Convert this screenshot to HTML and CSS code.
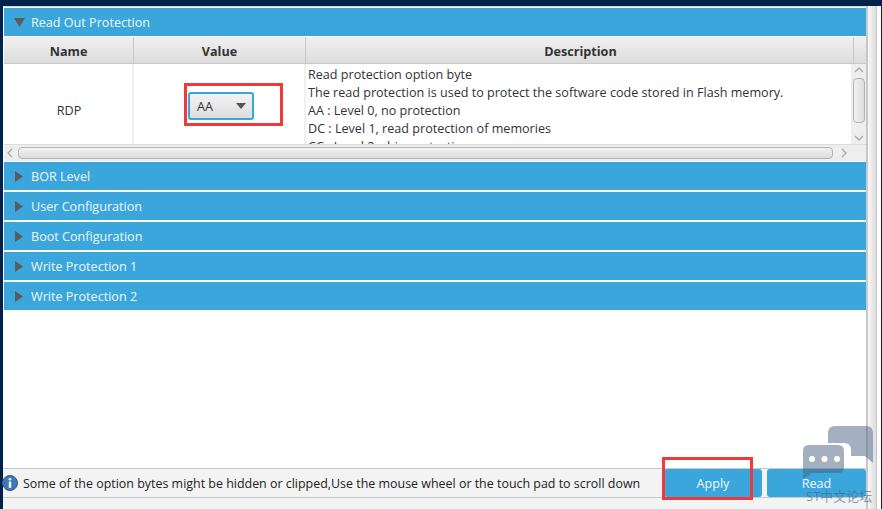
FILE: index.html
```html
<!DOCTYPE html>
<html lang="en">
  <head>
    <meta charset="UTF-8" />
    <title>Option Bytes</title>
    <link rel="stylesheet" href="styles.css">
  </head>
  <body>
    <div class="topbar"></div>
    <div class="window">
      <div class="panel">
        <div class="accordion">
          <div class="section section-open">
            <svg class="arrow" width="11" height="9" viewBox="0 0 11 9"><polygon points="0,0 11,0 5.5,9" /></svg>
            <span>Read Out Protection</span>
          </div>
          <div class="table">
            <div class="thead">
              <div class="th col-name">Name</div>
              <div class="th col-value">Value</div>
              <div class="th col-desc">Description</div>
              <div class="th col-corner"></div>
            </div>
            <div class="tbody">
              <div class="td col-name">RDP</div>
              <div class="td col-value">
                <div class="mark-select">
                  <div class="select">
                    <span>AA</span>
                    <svg width="10" height="6" viewBox="0 0 10 6"><polygon points="0,0 10,0 5,6" /></svg>
                  </div>
                </div>
              </div>
              <div class="td col-desc">
                <p>Read protection option byte</p>
                <p>The read protection is used to protect the software code stored in Flash memory.</p>
                <p>AA : Level 0, no protection</p>
                <p>DC : Level 1, read protection of memories</p>
                <p>CC : Level 2, chip protection</p>
              </div>
              <div class="vscroll">
                <svg width="10" height="6" viewBox="0 0 10 6"><polyline points="1,5 5,1 9,5" /></svg>
                <div class="vthumb"></div>
                <svg class="vdown" width="10" height="6" viewBox="0 0 10 6"><polyline points="1,1 5,5 9,1" /></svg>
              </div>
            </div>
            <div class="hscroll">
              <svg width="6" height="10" viewBox="0 0 6 10"><polyline points="5,1 1,5 5,9" /></svg>
              <div class="hthumb"></div>
              <svg width="6" height="10" viewBox="0 0 6 10"><polyline points="1,1 5,5 1,9" /></svg>
            </div>
          </div>
          <div class="section">
            <svg class="arrow" width="8" height="11" viewBox="0 0 8 11"><polygon points="0,0 8,5.5 0,11" /></svg>
            <span>BOR Level</span>
          </div>
          <div class="section">
            <svg class="arrow" width="8" height="11" viewBox="0 0 8 11"><polygon points="0,0 8,5.5 0,11" /></svg>
            <span>User Configuration</span>
          </div>
          <div class="section">
            <svg class="arrow" width="8" height="11" viewBox="0 0 8 11"><polygon points="0,0 8,5.5 0,11" /></svg>
            <span>Boot Configuration</span>
          </div>
          <div class="section">
            <svg class="arrow" width="8" height="11" viewBox="0 0 8 11"><polygon points="0,0 8,5.5 0,11" /></svg>
            <span>Write Protection 1</span>
          </div>
          <div class="section">
            <svg class="arrow" width="8" height="11" viewBox="0 0 8 11"><polygon points="0,0 8,5.5 0,11" /></svg>
            <span>Write Protection 2</span>
          </div>
        </div>
        <div class="footer">
          <svg class="info" width="16" height="16" viewBox="0 0 16 16">
            <circle cx="8" cy="8" r="7.5" fill="#3f78b5" stroke="#2a5a94" />
            <circle cx="8" cy="4.2" r="1.3" fill="#ffffff" />
            <rect x="6.8" y="6.6" width="2.4" height="6.2" fill="#ffffff" />
          </svg>
          <span class="notice">Some of the option bytes might be hidden or clipped,Use the mouse wheel or the touch pad to scroll down</span>
          <button class="btn btn-apply">Apply</button>
          <button class="btn btn-read">Read</button>
        </div>
        <div class="bottom"></div>
      </div>
      <div class="side"></div>
    </div>

    <div class="mark-apply"></div>

    <div class="watermark">
      <svg width="72" height="54" viewBox="0 0 72 54">
        <path d="M32 0 H63 Q70 0 70 7 V37 L62 30 H48 V24 Q48 17 41 17 H25 V7 Q25 0 32 0 Z" />
        <path d="M6 19 H35 Q41 19 41 25 V41 Q41 47 35 47 H9 L0 53 V25 Q0 19 6 19 Z" />
        <circle class="dot" cx="9" cy="33" r="3" />
        <circle class="dot" cx="21.500" cy="33" r="3" />
        <circle class="dot" cx="34" cy="33" r="3" />
      </svg>
      <span>ST中文论坛</span>
    </div>
  </body>
</html>
```

FILE: styles.css
```css
* {
  margin: 0;
  padding: 0;
  box-sizing: border-box;
}

html,
body {
  height: 100%;
  overflow: hidden;
}

body {
  background-color: #02224c;
  font-family: "Open Sans", "Noto Sans", sans-serif;
  font-size: 12.6px;
  color: #333;
  display: flex;
  flex-direction: column;
}

.topbar {
  height: 6px;
  flex-shrink: 0;
}

.window {
  flex: 1;
  display: flex;
  padding-left: 3px;
  min-height: 0;
}

.panel {
  width: 863px;
  background-color: #ffffff;
  border-top: 1px solid #d8d8d8;
  padding-top: 1px;
  display: flex;
  flex-direction: column;
}

.accordion {
  flex: 1;
  padding: 0 0 0 1px;
}

.section {
  height: 28px;
  margin-bottom: 2px;
  background-color: #3ba6db;
  color: #eef7fc;
  display: flex;
  align-items: center;
  padding-left: 11px;
}

.section-open {
  margin-bottom: 1px;
}

.section .arrow {
  fill: #5b5b5b;
  margin-right: 8px;
}

.section-open .arrow {
  margin-right: 6px;
  margin-left: -1px;
}

.table {
  margin-bottom: 1px;
  background-color: #f0f0f0;
}

.thead {
  display: flex;
  height: 27px;
  background: linear-gradient(#f0f0f0, #dcdcdc);
  border-bottom: 1px solid #c9c9c9;
}

.th {
  display: flex;
  align-items: center;
  justify-content: center;
  font-weight: 700;
  padding-top: 2px;
  color: #333;
  border-right: 1px solid #c8c8c8;
}

.col-name {
  width: 130px;
}

.col-value {
  width: 172px;
}

.th.col-desc {
  width: 548px;
  padding-left: 2px;
}

.col-corner {
  flex: 1;
  border-right: none;
}

.tbody {
  display: flex;
  height: 80px;
  background-color: #ffffff;
  overflow: hidden;
}

.td {
  border-right: 2px solid #f0f0f0;
  display: flex;
}

.td.col-name {
  align-items: center;
  justify-content: center;
  padding: 12px 0 0 2px;
}

.td.col-value {
  padding: 19px 0 0 50px;
}

.td.col-desc {
  display: block;
  width: 545px;
  border-right: none;
  padding: 2px 0 0 2px;
  line-height: 18px;
  overflow: hidden;
  white-space: nowrap;
}

.mark-select {
  width: 99px;
  height: 43px;
  flex-shrink: 0;
  border: 3px solid #f03a3a;
  padding: 6px 0 0 1px;
}

.select {
  width: 66px;
  height: 28px;
  border: 2px solid #3ba6db;
  border-radius: 3px;
  background: linear-gradient(#f2f2f2, #dedede);
  display: flex;
  align-items: center;
  justify-content: space-between;
  padding: 0 6px 0 7px;
}

.select svg {
  fill: #555;
}

.vscroll {
  flex: 1;
  background-color: #eeeeee;
  display: flex;
  flex-direction: column;
  align-items: center;
  padding-top: 3px;
}

.vscroll polyline,
.hscroll polyline {
  fill: none;
  stroke: #a8a8a8;
  stroke-width: 1.3;
}

.vthumb {
  width: 12px;
  height: 45px;
  margin-top: 5px;
  border: 1px solid #b4b4b4;
  border-radius: 4px;
  background: linear-gradient(to right, #f2f2f2, #dcdcdc);
}

.vdown {
  margin-top: 12px;
}

.hscroll {
  height: 17px;
  display: flex;
  align-items: center;
  padding-left: 3px;
  background-color: #eeeeee;
  border-top: 1px solid #dcdcdc;
}

.hthumb {
  width: 815px;
  height: 12px;
  margin: 0 8px 0 5px;
  border: 1px solid #b4b4b4;
  border-radius: 4px;
  background: linear-gradient(#f2f2f2, #dcdcdc);
}

.footer {
  height: 29px;
  flex-shrink: 0;
  background-color: #f3f3f3;
  border-top: 1px solid #c8c8c8;
  display: flex;
  align-items: center;
}

.info {
  margin-right: 5px;
  margin-left: -1px;
}

.notice {
  font-size: 12.45px;
  color: #222;
  width: 641px;
  white-space: nowrap;
}

.btn {
  height: 28px;
  border: none;
  border-radius: 3px;
  background-color: #3ba6db;
  color: #eef7fc;
  font-family: inherit;
  font-size: 12.6px;
  padding-top: 1px;
}

.btn-apply {
  width: 98px;
  margin-right: 5px;
}

.btn-read {
  width: 99px;
}

.bottom {
  height: 12px;
  flex-shrink: 0;
  background-color: #f3f3f3;
  border-top: 1px solid #c8c8c8;
}

.side {
  width: 15px;
  background: linear-gradient(to right, #c8c8c8 0, #c8c8c8 2px, #f8f8f8 2px, #dcdcdc 10px, #c8c8c8 10px, #c8c8c8 11px, #ffffff 11px, #ffffff 100%);
}

.mark-apply {
  position: absolute;
  left: 662px;
  top: 457px;
  width: 91px;
  height: 43px;
  border: 3px solid #f03a3a;
}

.watermark {
  position: absolute;
  left: 803px;
  top: 426px;
  width: 79px;
  height: 80px;
}

.watermark svg {
  fill: rgba(74, 95, 128, 0.5);
}

.watermark .dot {
  fill: #ffffff;
}

.watermark span {
  position: absolute;
  left: 3px;
  top: 60px;
  font-family: "Open Sans", "Noto Sans CJK SC", sans-serif;
  font-size: 13px;
  color: rgba(74, 95, 128, 0.6);
  white-space: nowrap;
}
```
